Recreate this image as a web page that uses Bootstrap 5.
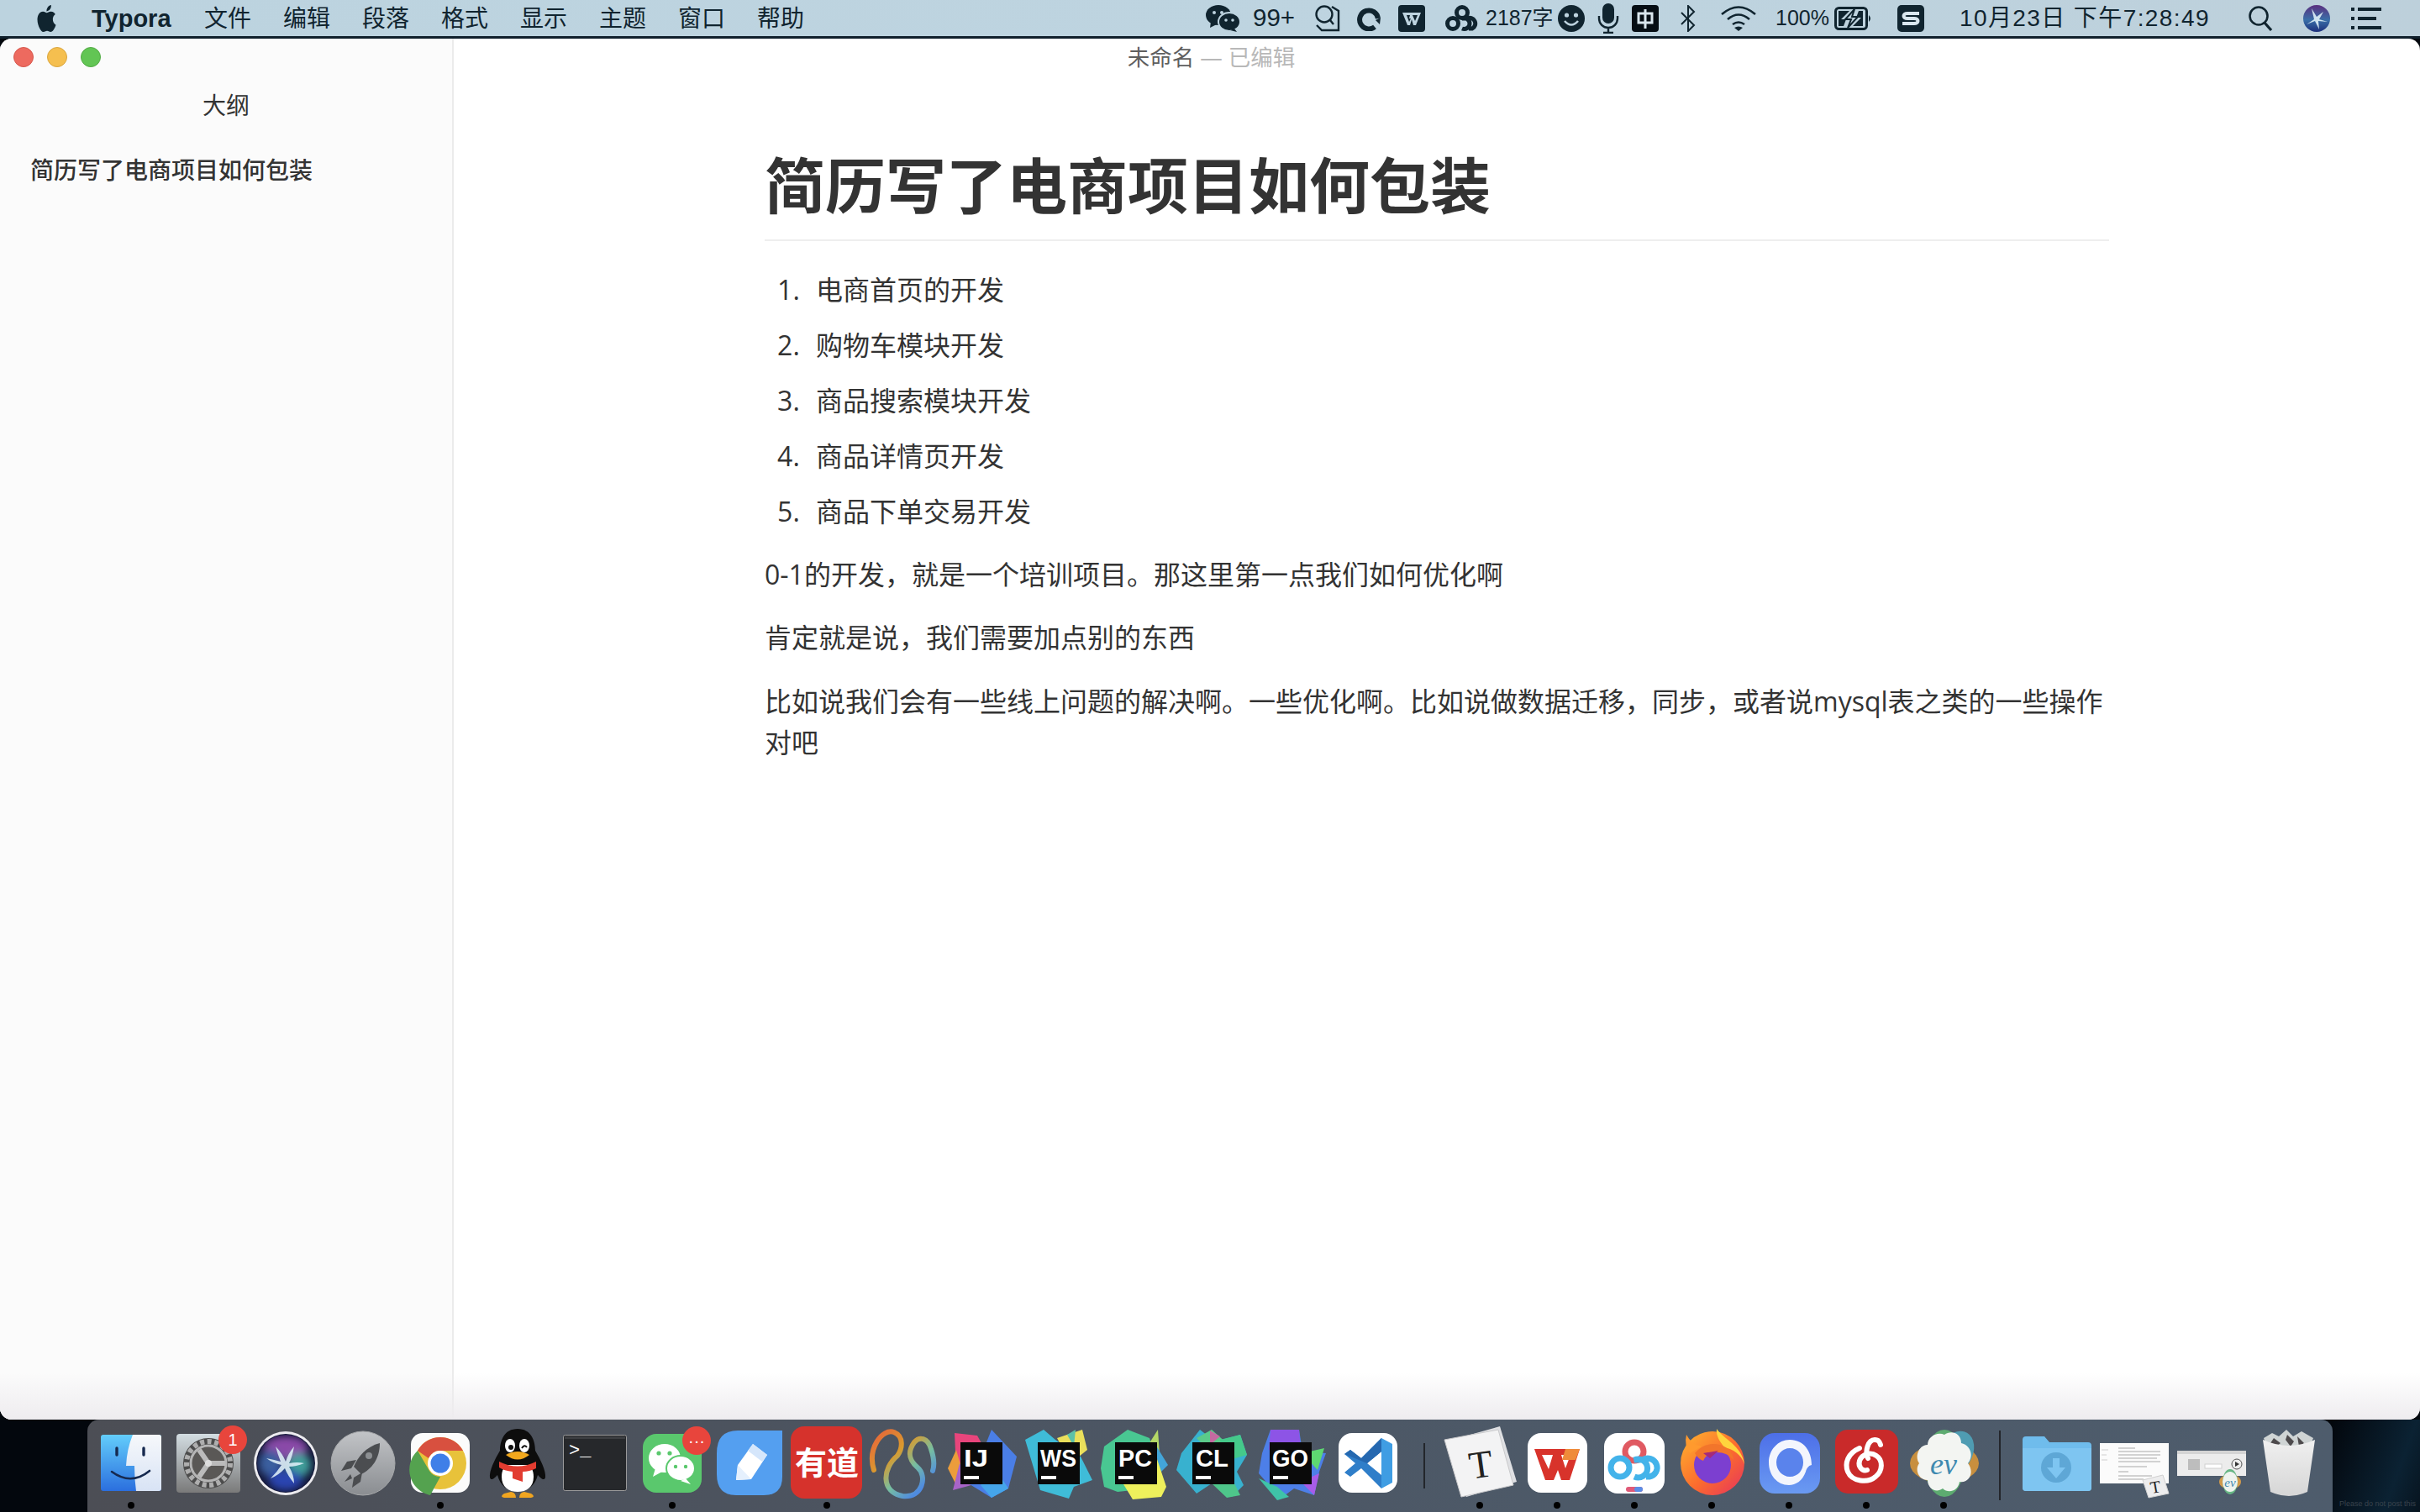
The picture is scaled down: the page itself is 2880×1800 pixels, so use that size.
<!DOCTYPE html>
<html lang="zh-CN">

<head>
    <meta charset="UTF-8">
    <title>未命名 — 已编辑</title>
    <link rel="stylesheet" href="https://cdn.jsdelivr.net/npm/bootstrap@5.3.3/dist/css/bootstrap.min.css">
    <script src="https://cdn.jsdelivr.net/npm/bootstrap@5.3.3/dist/js/bootstrap.bundle.min.js"></script>
    <style>
        html, body { height: 1800px; overflow: hidden; }
        body { background: #03070d; font-family: "Open Sans", "Noto Sans CJK SC", sans-serif; color: #333; }

        /* menu bar */
        .menubar { height: 46px; background: linear-gradient(90deg, #bcd3df, #bed4e0 60%, #bdd0db); border-bottom: 3px solid #10202c; color: #10242f; font-family: "Liberation Sans", "Noto Sans CJK SC", sans-serif; white-space: nowrap; flex: none; }
        .apple { width: 27px; height: 32px; margin-left: 42px; fill: #10242f; }
        .app-name { margin-left: 40px; width: 96px; font-size: 29px; font-weight: 700; padding-top: 2px; }
        .menu-item { margin-left: 38px; width: 56px; font-size: 28px; padding-top: 2px; }
        .status { fill: #10242f; flex: none; }
        .st-big { font-size: 29.500px; }
        .st-small { font-size: 25px; }
        .st-clock { font-size: 28px; letter-spacing: 1.4px; width: 296px; }
        .ml7 { margin-left: 7px; } .ml8 { margin-left: 8px; } .ml10 { margin-left: 10px; }
        .ml15 { margin-left: 15px; } .ml19 { margin-left: 19px; } .ml21 { margin-left: 21px; }
        .ml23 { margin-left: 23px; } .ml24 { margin-left: 24px; } .ml25 { margin-left: 25px; }
        .ml26 { margin-left: 26px; } .ml30 { margin-left: 30px; } .ml36 { margin-left: 36px; }
        .ml42 { margin-left: 42px; } .ml48 { margin-left: 48px; }
        .w50 { width: 50px; } .w60 { width: 60px; } .w78 { width: 78px; }
        .mr46 { margin-right: 46px; }

        /* window */
        .app-window { height: 1644px; flex: none; background: #fff; border-radius: 14px; overflow: hidden; position: relative; }
        .app-window::after { content: ""; position: absolute; left: 0; right: 0; bottom: 0; height: 56px; background: linear-gradient(rgba(238,236,239,0), #eeecef); pointer-events: none; }
        .titlebar { position: absolute; top: 0; left: 0; right: 0; height: 44px; padding-left: 3px; font-size: 26.500px; color: #5f5f5f; line-height: 44px; }
        .lights { position: absolute; left: 16px; top: 10px; }
        .light { width: 24px; height: 24px; border-radius: 50%; }
        .light-red { background: #ed6a5f; border: 1px solid #d5574d; }
        .light-yellow { background: #f5bf4f; border: 1px solid #d9a53f; }
        .light-green { background: #62c554; border: 1px solid #52aa45; }
        .edited { color: #b8b8b8; }
        .outline { width: 540px; flex: none; background: #fbfbfb; border-right: 2px solid #ebebeb; padding-top: 59px; }
        .outline-title { font-size: 28px; line-height: 40px; color: #333; width: 538px; }
        .outline-item { font-size: 28px; font-weight: 500; line-height: 40px; margin: 37px 0 0 36px; color: #333; }
        .paper { width: 1600px; margin: 0 auto; padding-top: 131px; font-size: 32px; line-height: 49.6px; }
        .paper h1 { font-size: 72px; font-weight: 700; line-height: 86px; margin: 0 0 33px; padding-bottom: 22px; border-bottom: 2px solid #eee; color: #333; }
        .paper ol { padding-left: 61px; margin: 0 0 25px; }
        .paper li { margin-bottom: 16.4px; }
        .paper li::marker { content: counter(list-item) ".\2002\200A"; }
        .paper p { margin: 0 0 26px; }

        /* dock */
        .dock-row { height: 110px; flex: none; }
        .gutter { width: 104px; flex: none; overflow: hidden; white-space: nowrap; }
        .gutter-right { background: linear-gradient(110deg, #03070d, #0b2233 70%, #07141f); color: #39434d; font-family: "Liberation Sans", sans-serif; font-size: 9px; padding: 0 0 3px 8px; }
        .dock { width: 2672px; flex: none; padding: 10px 8px 0 6px; border-radius: 14px 14px 0 0; background: linear-gradient(90deg, #4c4e55, #4c5562 40%, #4d5a69 70%, #4e5c6c); }
        .dock-cell { width: 92px; height: 100px; flex: none; position: relative; }
        .dock-cell svg { display: block; overflow: visible; }
        .dock-dot { display: block; width: 8px; height: 8px; border-radius: 50%; margin: 2px auto 0; background: #000; }
        .dock-sep { width: 41px; flex: none; }
        .dock-sep i { display: block; width: 2px; margin: 0 auto; background: #23262b; }
        .sep-short { height: 54px; margin-top: 18px !important; }
        .sep-tall { height: 83px; margin-top: 3px !important; }
        .dock-badge { position: absolute; width: 34px; height: 34px; border-radius: 50%; background: #e8453c; color: #fff; font-size: 20px; line-height: 34px; text-align: center; padding: 0; font-family: "Liberation Sans", sans-serif; }
        .badge-set { left: 58px; top: -3px; }
        .badge-chat { left: 58px; top: -2px; }
        .jb-text { font-family: "Liberation Sans", sans-serif; font-weight: 700; font-size: 29px; fill: #fff; }
    </style>
</head>

<body class="d-flex flex-column">
    <header class="menubar d-flex align-items-center">
        <svg class="apple" viewBox="0 0 24 24" preserveAspectRatio="none"><path d="M12.152 6.896c-.948 0-2.415-1.078-3.96-1.04-2.04.027-3.91 1.183-4.961 3.014-2.117 3.675-.546 9.103 1.519 12.09 1.013 1.454 2.208 3.09 3.792 3.039 1.52-.065 2.09-.987 3.935-.987 1.831 0 2.35.987 3.96.948 1.637-.026 2.676-1.48 3.676-2.948 1.156-1.688 1.636-3.325 1.662-3.415-.039-.013-3.182-1.221-3.22-4.857-.026-3.04 2.48-4.494 2.597-4.559-1.429-2.09-3.623-2.324-4.39-2.376-2-.156-3.675 1.09-4.61 1.09zM15.53 3.83c.843-1.012 1.4-2.427 1.245-3.83-1.207.052-2.662.805-3.532 1.818-.78.896-1.454 2.338-1.273 3.714 1.338.104 2.715-.688 3.559-1.701"/></svg>
        <span class="app-name">Typora</span>
        <span class="menu-item">文件</span>
        <span class="menu-item">编辑</span>
        <span class="menu-item">段落</span>
        <span class="menu-item">格式</span>
        <span class="menu-item">显示</span>
        <span class="menu-item">主题</span>
        <span class="menu-item">窗口</span>
        <span class="menu-item">帮助</span>

        <!-- status items, left to right -->
        <svg class="status ms-auto" width="41" height="32" viewBox="0 0 41 32"><ellipse cx="15" cy="12" rx="15" ry="12"/><path d="M6 20l-1 7 8-4z"/><ellipse cx="28" cy="20" rx="13" ry="11" stroke="#bdd3df" stroke-width="2"/><path d="M34 28l3 4-8-2z"/><circle cx="10" cy="9" r="2" fill="#bdd3df"/><circle cx="19" cy="9" r="2" fill="#bdd3df"/><circle cx="24" cy="18" r="1.8" fill="#bdd3df"/><circle cx="32" cy="18" r="1.8" fill="#bdd3df"/></svg>
        <span class="st-big ml15 w50">99+</span>
        <svg class="status ml24" width="31" height="32" viewBox="0 0 31 32"><circle cx="11" cy="11" r="9.500" fill="none" stroke="#10242f" stroke-width="2.400"/><path d="M18 18l4 5M20 2l8 5v23H8l-6-6" fill="none" stroke="#10242f" stroke-width="2.400"/></svg>
        <svg class="status ml19" width="28" height="30" viewBox="0 0 28 30"><path d="M21 25A11 11 0 1 1 25 15" fill="none" stroke="#10242f" stroke-width="6"/><path d="M22 17l6-3-1 8z"/></svg>
        <svg class="status ml21" width="32" height="32" viewBox="0 0 32 32"><rect width="32" height="32" rx="4"/><path d="M5 9h22l-6 15h-3l-2-7-2 7h-3z" fill="#bdd3df"/><path d="M10 12h4l-1 4 2 0-2 4zM17 12h6l-3 7z"/></svg>
        <svg class="status ml24" width="41" height="32" viewBox="0 0 41 32"><g fill="none" stroke="#10242f" stroke-width="5"><circle cx="20" cy="9" r="6.500"/><circle cx="9" cy="22" r="6.500"/><path d="M20 28a6.500 6.500 0 1 0 0-12h6a6.500 6.500 0 1 1 6 12h-4"/></g></svg>
        <span class="st-small ml7 w78">2187字</span>
        <svg class="status ml8" width="32" height="32" viewBox="0 0 32 32"><circle cx="16" cy="16" r="16"/><circle cx="10.500" cy="12" r="2.600" fill="#bdd3df"/><circle cx="21.500" cy="12" r="2.600" fill="#bdd3df"/><path d="M8 19q8 9 16 0" fill="none" stroke="#bdd3df" stroke-width="2.600"/></svg>
        <svg class="status ml15" width="26" height="36" viewBox="0 0 26 36"><rect x="6" y="0" width="14" height="24" rx="7"/><path d="M2 15v3a11 11 0 0 0 22 0v-3M13 29v5M7 35h12" fill="none" stroke="#10242f" stroke-width="2.400"/></svg>
        <svg class="status ml15" width="32" height="32" viewBox="0 0 32 32"><rect width="32" height="32" rx="4" fill="#050d14"/><path d="M8 10h16v11H8zM16 5v23" fill="none" stroke="#d9e6ee" stroke-width="3"/></svg>
        <svg class="status ml26" width="18" height="32" viewBox="0 0 18 32"><path d="M1 9l15 15-7 7V1l7 7L1 23" fill="none" stroke="#10242f" stroke-width="2"/></svg>
        <svg class="status ml30" width="42" height="30" viewBox="0 0 42 30"><g fill="none" stroke="#10242f" stroke-width="2.600"><path d="M1 10q20-17 40 0"/><path d="M8 16q13-11 26 0"/><path d="M14 22q7-5 14 0"/></g><path d="M16 26q5-3 10 0l-5 4z"/></svg>
        <span class="st-small ml23 w60">100%</span>
        <svg class="status ml10" width="45" height="28" viewBox="0 0 45 28"><rect x="1.500" y="1.500" width="37" height="25" rx="4" fill="none" stroke="#10242f" stroke-width="3"/><path d="M41 10q4 4 0 8z"/><path d="M5 5h13L8 15h6l-3 8H5zM34 23H22l10-10h-6l3-8h5z"/><path d="M24 3L13 15h7l-4 10 12-13h-7z" fill="none" stroke="#10242f" stroke-width="2"/></svg>
        <svg class="status ml30" width="32" height="32" viewBox="0 0 32 32"><rect width="32" height="32" rx="5"/><path d="M26 10H12c-6 0-6 6 0 6h8c6 0 6 6 0 6H6" fill="none" stroke="#d9e6ee" stroke-width="4"/></svg>
        <span class="st-clock ml42">10月23日 下午7:28:49</span>
        <svg class="status ml48" width="29" height="30" viewBox="0 0 29 30"><circle cx="12" cy="12" r="10.500" fill="none" stroke="#10242f" stroke-width="2.600"/><path d="M19 20l8 9" stroke="#10242f" stroke-width="3.200"/></svg>
        <svg class="status ml36" width="32" height="32" viewBox="0 0 32 32"><defs><linearGradient id="siriMini" x1="0" y1="0" x2="0" y2="1"><stop offset="0" stop-color="#5a2f7f"/><stop offset=".55" stop-color="#3a6fa8"/><stop offset="1" stop-color="#1c2f7c"/></linearGradient></defs><circle cx="16" cy="16" r="16" fill="url(#siriMini)"/><path d="M10 4l6 10 8-6-5 9 10 3-11-1 1 10-5-10-10 4 9-6z" fill="#dff1f7" opacity=".9"/></svg>
        <svg class="status ml25 mr46" width="36" height="26" viewBox="0 0 36 26"><path d="M0 0h4v4H0zM8 0h28v4H8zM0 11h4v4H0zM8 11h22v4H8zM0 22h4v4H0zM8 22h28v4H8z"/></svg>
    </header>

    <main class="app-window d-flex">
        <aside class="outline">
            <div class="outline-title text-center">大纲</div>
            <div class="outline-item">简历写了电商项目如何包装</div>
        </aside>
        <section class="flex-grow-1">
            <article class="paper">
                <h1>简历写了电商项目如何包装</h1>
                <ol>
                    <li>电商首页的开发</li>
                    <li>购物车模块开发</li>
                    <li>商品搜索模块开发</li>
                    <li>商品详情页开发</li>
                    <li>商品下单交易开发</li>
                </ol>
                <p>0-1的开发&#xFF0C;就是一个培训项目。那这里第一点我们如何优化啊</p>
                <p>肯定就是说&#xFF0C;我们需要加点别的东西</p>
                <p>比如说我们会有一些线上问题的解决啊。一些优化啊。比如说做数据迁移&#xFF0C;同步&#xFF0C;或者说mysql表之类的一些操作对吧</p>
            </article>
        </section>
        <div class="titlebar text-center">未命名 <span class="edited">— 已编辑</span></div>
        <div class="lights d-flex gap-3">
            <span class="light light-red"></span>
            <span class="light light-yellow"></span>
            <span class="light light-green"></span>
        </div>
    </main>

    <div class="dock-row d-flex">
        <div class="gutter"></div>
        <nav class="dock d-flex">
            <!-- finder -->
            <div class="dock-cell"><svg width="92" height="86" viewBox="0 0 92 86"><defs><linearGradient id="fa" x1="0" y1="0" x2="0" y2="1"><stop offset="0" stop-color="#63cdfb"/><stop offset="1" stop-color="#2b6fde"/></linearGradient><linearGradient id="fb" x1="0" y1="0" x2="0" y2="1"><stop offset="0" stop-color="#f6f8fb"/><stop offset="1" stop-color="#d8e3f5"/></linearGradient></defs><rect x="10" y="8" width="72" height="67" rx="3" fill="url(#fa)"/><path d="M48 8h31a3 3 0 0 1 3 3v61a3 3 0 0 1-3 3H52q-2-14-2-30H40q1-20 8-37z" fill="url(#fb)"/><path d="M29 24v8M61 24v8" stroke="#16294f" stroke-width="3.400" stroke-linecap="round"/><path d="M23 52q23 17 45-1" fill="none" stroke="#16294f" stroke-width="2.600" stroke-linecap="round"/></svg><i class="dock-dot"></i></div>
            <!-- system preferences -->
            <div class="dock-cell"><svg width="92" height="86" viewBox="0 0 92 86"><defs><linearGradient id="sp" x1="0" y1="0" x2="0" y2="1"><stop offset="0" stop-color="#d3dde2"/><stop offset="1" stop-color="#7a7a7a"/></linearGradient></defs><rect x="8" y="7" width="76" height="70" rx="4" fill="url(#sp)"/><circle cx="46" cy="42" r="30" fill="#4c4c4c"/><circle cx="46" cy="42" r="26" fill="none" stroke="#aeaeae" stroke-width="6" stroke-dasharray="5 3.600"/><circle cx="46" cy="42" r="21" fill="#5a5856" stroke="#b5b5b5" stroke-width="3"/><path d="M46 42h20M46 42L35 26M46 42L35 58" stroke="#bbb" stroke-width="6"/><circle cx="46" cy="42" r="4" fill="#ddd"/></svg><i class="dock-dot invisible"></i><span class="dock-badge badge-set">1</span></div>
            <!-- siri -->
            <div class="dock-cell"><svg width="92" height="86" viewBox="0 0 92 86"><defs><filter id="sb"><feGaussianBlur stdDeviation="5"/></filter><clipPath id="sc"><circle cx="46" cy="42" r="34"/></clipPath></defs><circle cx="46" cy="42" r="38" fill="#ecebef"/><circle cx="46" cy="42" r="35" fill="#14183a"/><g clip-path="url(#sc)"><g filter="url(#sb)"><ellipse cx="46" cy="24" rx="26" ry="14" fill="#8a4aa8"/><ellipse cx="28" cy="42" rx="14" ry="16" fill="#3a5f9f"/><ellipse cx="62" cy="44" rx="14" ry="14" fill="#3f9f9a"/><ellipse cx="46" cy="62" rx="20" ry="12" fill="#2a45b0"/></g><path d="M34 22q8 8 12 18 3-10 10-18-2 12-6 20 10-2 18 0-10 4-18 4 6 10 6 20-8-10-11-18-7 8-17 12 8-8 13-16-10-2-18-8 10 2 17 4-4-10-6-18z" fill="#dcecf5" opacity=".9"/></g></svg><i class="dock-dot invisible"></i></div>
            <!-- launchpad -->
            <div class="dock-cell"><svg width="92" height="86" viewBox="0 0 92 86"><defs><linearGradient id="lp" x1="0" y1="0" x2="0" y2="1"><stop offset="0" stop-color="#c2c4c7"/><stop offset="1" stop-color="#8a8d91"/></linearGradient></defs><circle cx="46" cy="42" r="38" fill="url(#lp)" stroke="#a6a8aa" stroke-width="1"/><path d="M66 18C50 22 40 34 35 46l9 9c12-6 22-18 22-37z" fill="#4b4d50"/><path d="M38 38l-11 2-7 11 12-3zM45 53l-2 11-10 7 2-12zM31 55l-7 9 9-4z" fill="#4b4d50"/><circle cx="53" cy="33" r="4" fill="#8c8f92"/></svg><i class="dock-dot invisible"></i></div>
            <!-- chrome -->
            <div class="dock-cell"><svg width="92" height="86" viewBox="0 0 92 86"><rect x="11" y="6" width="70" height="71" rx="14" fill="#fbfbfb"/><circle cx="46" cy="42" r="31" fill="#e8c23a"/><path d="M46 11a31 31 0 0 1 27 16H46a15 15 0 0 0-14 9L19 27a31 31 0 0 1 27-16z" fill="#d8503f"/><path d="M19 27l14 24a15 15 0 0 0 13 7l-12 22A31 31 0 0 1 19 27z" fill="#54a24f"/><circle cx="46" cy="42" r="15" fill="#fff"/><circle cx="46" cy="42" r="11.500" fill="#3f7fe8"/></svg><i class="dock-dot"></i></div>
            <!-- qq -->
            <div class="dock-cell"><svg width="92" height="86" viewBox="0 0 92 86"><path d="M46 1c-16 0-21 14-21 26-6 10-13 24-12 32 2 5 6 0 9-3 3 12 12 20 24 20s21-8 24-20c3 3 7 8 9 3 1-8-6-22-12-32C67 15 62 1 46 1z" fill="#0d0d0d"/><path d="M27 58c0-8 3-12 8-14h22c5 2 8 6 8 14 0 12-8 18-19 18s-19-6-19-18z" fill="#fff"/><ellipse cx="37" cy="21" rx="6" ry="8" fill="#fff"/><ellipse cx="54" cy="21" rx="6" ry="8" fill="#fff"/><circle cx="38" cy="23" r="3" fill="#111"/><path d="M51 24q3-5 6-1" stroke="#111" stroke-width="2" fill="none"/><path d="M32 32q14-8 28 0-14 11-28 0z" fill="#f2a81d"/><path d="M24 40q22 11 44 0v8q-8 4-16 4v12l-12-4v-8q-10-1-16-5z" fill="#e23c30"/><path d="M30 78q-6 4 0 5h14q0-6-6-7zM62 78q6 4 0 5H48q0-6 6-7z" fill="#f0a520"/></svg><i class="dock-dot invisible"></i></div>
            <!-- terminal -->
            <div class="dock-cell"><svg width="92" height="86" viewBox="0 0 92 86"><rect x="8.500" y="8.500" width="75" height="66" rx="2" fill="#26282b" stroke="#9a9a9a"/><rect x="10" y="10" width="72" height="3" fill="#3c3e41"/><text x="15" y="33" fill="#fff" font-size="22" font-family="Liberation Mono, monospace">&gt;_</text></svg><i class="dock-dot invisible"></i></div>
            <!-- wechat -->
            <div class="dock-cell"><svg width="92" height="86" viewBox="0 0 92 86"><rect x="11" y="7" width="70" height="70" rx="16" fill="#5ac86d"/><ellipse cx="37" cy="36" rx="19" ry="17" fill="#fff"/><path d="M26 48l-3 10 11-6z" fill="#fff"/><ellipse cx="56" cy="48" rx="17" ry="15" fill="#fff" stroke="#5ac86d" stroke-width="2"/><path d="M62 60l6 7-12-4z" fill="#fff"/><circle cx="30" cy="30" r="2.600" fill="#5ac86d"/><circle cx="43" cy="30" r="2.600" fill="#5ac86d"/><circle cx="50" cy="46" r="2.200" fill="#5ac86d"/><circle cx="62" cy="46" r="2.200" fill="#5ac86d"/></svg><i class="dock-dot"></i><span class="dock-badge badge-chat">···</span></div>
            <!-- blue notes -->
            <div class="dock-cell"><svg width="92" height="86" viewBox="0 0 92 86"><path d="M32 3h53v55q0 22-22 22H30Q7 80 7 55V30Q7 3 32 3z" fill="#549ff0"/><path d="M30 62l2-18 18-25 17 13-19 29z" fill="#fff"/><path d="M50 19l17 13-6 8-17-13z" fill="#d5e6fb"/><path d="M30 62l2-18 16 17z" fill="#e5f0fd"/></svg><i class="dock-dot invisible"></i></div>
            <!-- youdao -->
            <div class="dock-cell"><svg width="92" height="86" viewBox="0 0 92 86"><rect x="3" y="-2" width="85" height="86" rx="16" fill="#d6322c"/><text x="46" y="55" text-anchor="middle" fill="#fff" font-size="38" font-weight="700" font-family="Noto Sans CJK SC, sans-serif">有道</text></svg><i class="dock-dot"></i></div>
            <!-- navicat -->
            <div class="dock-cell"><svg width="92" height="86" viewBox="0 0 92 86"><defs><linearGradient id="nv" gradientUnits="userSpaceOnUse" x1="10" y1="5" x2="80" y2="80"><stop offset="0" stop-color="#e8643a"/><stop offset=".35" stop-color="#d99a2e"/><stop offset=".6" stop-color="#78bfa0"/><stop offset=".85" stop-color="#4f8be0"/></linearGradient></defs><path d="M10 50C2 24 20 0 34 5c12 5 10 20 4 28C20 48 18 76 44 81c24 3 30-24 18-34-8-7-14-16-4-30 6-7 16-6 20 8 4 12 4 20 2 26" fill="none" stroke="url(#nv)" stroke-width="6" stroke-linecap="round"/></svg><i class="dock-dot invisible"></i></div>
            <!-- intellij -->
            <div class="dock-cell"><svg width="92" height="86" viewBox="0 0 92 86"><path d="M14 6l27 3 10 18-15 30-20-6z" fill="#e8457c"/><path d="M6 48l10-22 8 28-6 18z" fill="#eb9d3b"/><path d="M12 74l8-32 14 26z" fill="#a864c8"/><path d="M58 2l30 32-10 38-20 11-26-16z" fill="#4a7ee6"/><path d="M45 68l20-16 13 20-20 11z" fill="#45a5ea"/><rect x="21" y="17" width="50" height="50" fill="#0a0a0a"/><text class="jb-text" x="25" y="46" textLength="29" lengthAdjust="spacingAndGlyphs">IJ</text><rect x="25" y="57" width="18" height="4" fill="#fff"/></svg><i class="dock-dot invisible"></i></div>
            <!-- webstorm -->
            <div class="dock-cell"><svg width="92" height="86" viewBox="0 0 92 86"><path d="M6 14L28 2l14 12 30 20 14 28-22 8-6 14-34-10z" fill="#3fbcd8"/><path d="M44 12l30-10 6 24-20 16z" fill="#eadf5b"/><path d="M56 8l10-6-2 20z" fill="#5cc1a8"/><rect x="21" y="17" width="50" height="50" fill="#0a0a0a"/><text class="jb-text" x="24" y="46" textLength="43" lengthAdjust="spacingAndGlyphs">WS</text><rect x="25" y="57" width="18" height="4" fill="#fff"/></svg><i class="dock-dot invisible"></i></div>
            <!-- pycharm -->
            <div class="dock-cell"><svg width="92" height="86" viewBox="0 0 92 86"><path d="M8 22L36 2l26 10 10 30-12 30-36 4-16-6-4-22z" fill="#49c792"/><path d="M58 24l14-22 2 30z" fill="#b4d866"/><path d="M68 18l16 26-10 10z" fill="#43a5d9"/><path d="M28 62l42-28 12 36-6 12-34 3z" fill="#eef05c"/><rect x="21" y="17" width="50" height="50" fill="#0a0a0a"/><text class="jb-text" x="25" y="46" textLength="40" lengthAdjust="spacingAndGlyphs">PC</text><rect x="25" y="57" width="18" height="4" fill="#fff"/></svg><i class="dock-dot invisible"></i></div>
            <!-- clion -->
            <div class="dock-cell"><svg width="92" height="86" viewBox="0 0 92 86"><path d="M8 30L30 2l18 14 30-8 8 24-12 20 8 16-14 14-24-16-18 12-24-28z" fill="#38b1cf"/><path d="M26 12L44 2l20 18-20 10z" fill="#5bcb8a"/><path d="M42 3l12 7-12 10z" fill="#c46aa0"/><path d="M54 14l24-6 8 24-28 8z" fill="#45c98a"/><path d="M42 64l22-12 14 28-16 3z" fill="#4ec68a"/><rect x="21" y="17" width="50" height="50" fill="#0a0a0a"/><text class="jb-text" x="25" y="46" textLength="39" lengthAdjust="spacingAndGlyphs">CL</text><rect x="25" y="57" width="18" height="4" fill="#fff"/></svg><i class="dock-dot invisible"></i></div>
            <!-- goland -->
            <div class="dock-cell"><svg width="92" height="86" viewBox="0 0 92 86"><path d="M22 2h34l4 26 28 2-8 22-6 28-24-8-16 12-26-30 4-24z" fill="#4d7fe8"/><path d="M22 2h34l2 24H20z" fill="#8d54e6"/><path d="M60 30l26-6-8 26z" fill="#5ed872"/><path d="M58 64l22-10-6 26z" fill="#a85ce8"/><path d="M8 60l22 10 14 12-14 4z" fill="#3fc3a8"/><rect x="21" y="17" width="50" height="50" fill="#0a0a0a"/><text class="jb-text" x="24" y="46" textLength="43" lengthAdjust="spacingAndGlyphs">GO</text><rect x="25" y="57" width="18" height="4" fill="#fff"/></svg><i class="dock-dot invisible"></i></div>
            <!-- vscode -->
            <div class="dock-cell"><svg width="92" height="86" viewBox="0 0 92 86"><rect x="11" y="6" width="70" height="71" rx="16" fill="#fff"/><path d="M62 12L38 36 25 26l-7 5 13 11-13 11 7 5 13-10 24 24V56L45 42l17-14z" fill="#2f7ec9"/><path d="M62 12L38 36 25 26l-7 5 27 11 17-14z" fill="#2568b0"/><path d="M62 12l13 7v46l-13 7z" fill="#3f9de3"/></svg><i class="dock-dot invisible"></i></div>
            <div class="dock-sep"><i class="sep-short"></i></div>
            <!-- typora -->
            <div class="dock-cell"><svg width="92" height="86" viewBox="0 0 92 86"><path d="M6 16L70 -2l20 66-60 18z" fill="#dfe0e3"/><path d="M4 14L68 2l18 66-62 14z" fill="#f3f3f4" stroke="#c9c9cb"/><text x="47" y="59" text-anchor="middle" transform="rotate(-8 47 41)" font-size="46" fill="#222" font-family="Liberation Serif, serif">T</text></svg><i class="dock-dot"></i></div>
            <!-- wps -->
            <div class="dock-cell"><svg width="92" height="86" viewBox="0 0 92 86"><rect x="11" y="6" width="71" height="71" rx="16" fill="#fff"/><path d="M19 25h54L61 62H51l-4-12-5 12H32z" fill="#d8332b"/><path d="M28 32h13l-5 17zM51 32h11l-6 16z" fill="#fff"/><path d="M56 25h17l-5 13H52z" fill="#ef8b3a"/></svg><i class="dock-dot"></i></div>
            <!-- baidu netdisk -->
            <div class="dock-cell"><svg width="92" height="86" viewBox="0 0 92 86"><rect x="10" y="6" width="72" height="72" rx="16" fill="#fff"/><g fill="none" stroke-width="7"><circle cx="46" cy="28" r="11" stroke="#e05a62"/><circle cx="29" cy="47" r="11" stroke="#43b3ea"/><path d="M46 58a11 11 0 1 0 0-20h10a11 11 0 1 1 8 20h-4" stroke="#43b3ea"/></g><rect x="36" y="70" width="20" height="6" rx="3" fill="#e05a78"/><rect x="46" y="70" width="10" height="6" rx="3" fill="#5b8de6"/></svg><i class="dock-dot"></i></div>
            <!-- firefox -->
            <div class="dock-cell"><svg width="92" height="86" viewBox="0 0 92 86"><defs><linearGradient id="ff" x1="0" y1="0" x2="1" y2="1"><stop offset="0" stop-color="#ffb52e"/><stop offset=".55" stop-color="#fb6b2e"/><stop offset="1" stop-color="#e6325f"/></linearGradient></defs><circle cx="47" cy="42" r="38" fill="url(#ff)"/><path d="M52 1c8 12 30 20 33 42-4-12-14-18-24-20-6-8-10-14-9-22z" fill="#ffd53d"/><path d="M16 8q-3 12 4 22l14-8q-12-2-18-14z" fill="#ff9a2e"/><circle cx="47" cy="44" r="22" fill="#7c3fd0"/><path d="M26 30q12-14 30-10 14 4 16 18-8-10-22-9-10 1-14 10-6-2-10-9z" fill="#f2752b"/><path d="M36 30l18-3-10 9z" fill="#a52a7a"/></svg><i class="dock-dot"></i></div>
            <!-- blue ring app -->
            <div class="dock-cell"><svg width="92" height="86" viewBox="0 0 92 86"><defs><linearGradient id="rg" x1="0" y1="0" x2="0" y2="1"><stop offset="0" stop-color="#4d6fe8"/><stop offset="1" stop-color="#6a9af2"/></linearGradient></defs><rect x="11" y="6" width="72" height="72" rx="18" fill="url(#rg)"/><path d="M47 14c17 0 26 14 26 30-4 1-6 4-7 8-4 11-12 16-20 16-14 0-24-12-24-27s11-27 25-27z" fill="#f3f5fd"/><path d="M47 24c-9 0-16 8-16 17s7 17 16 17c10 0 16-8 16-17s-6-17-16-17z" fill="#5a83ec"/></svg><i class="dock-dot"></i></div>
            <!-- netease music -->
            <div class="dock-cell"><svg width="92" height="86" viewBox="0 0 92 86"><rect x="9" y="2" width="75" height="76" rx="15" fill="#c92a2a"/><path d="M38 24c-14 6-18 18-14 28 5 12 24 14 33 6 9-7 9-20 1-25-7-5-17-2-20 6-2 7 3 13 9 11M48 36c-4-8 0-22 8-22 5 0 6 3 7 6" fill="none" stroke="#fff" stroke-width="6" stroke-linecap="round"/></svg><i class="dock-dot"></i></div>
            <!-- ev recorder -->
            <div class="dock-cell"><svg width="92" height="86" viewBox="0 0 92 86"><ellipse cx="47" cy="42" rx="41" ry="24" fill="#c88f3e"/><ellipse cx="47" cy="42" rx="24" ry="40" fill="#5dab70"/><ellipse cx="60" cy="30" rx="20" ry="28" fill="#4f9cb2" transform="rotate(30 60 30)"/><path d="M47 8c8-6 20-2 20 10 10 2 16 14 8 24 8 10 2 24-10 22-2 12-14 14-20 8-8 6-18 0-18-10-10 0-16-12-10-20-6-8 0-22 10-22 0-10 12-16 20-12z" fill="#f3f5f2"/><text x="46" y="55" text-anchor="middle" font-size="36" font-style="italic" fill="#3f8ab0" font-family="Liberation Serif, serif">ev</text></svg><i class="dock-dot"></i></div>
            <div class="dock-sep"><i class="sep-tall"></i></div>
            <!-- downloads folder -->
            <div class="dock-cell"><svg width="92" height="86" viewBox="0 0 92 86"><path d="M7 14a4 4 0 0 1 4-4h22l6 7h46a4 4 0 0 1 4 4v50a4 4 0 0 1-4 4H11a4 4 0 0 1-4-4z" fill="#6fbcec"/><path d="M7 24h82v47a4 4 0 0 1-4 4H11a4 4 0 0 1-4-4z" fill="#7ec5f1"/><circle cx="47" cy="47" r="18" fill="#5ea7d6"/><path d="M43 36h8v11h7L47 60 36 47h7z" fill="#7ec5f1"/></svg><i class="dock-dot invisible"></i></div>
            <!-- stack: document -->
            <div class="dock-cell"><svg width="92" height="86" viewBox="0 0 92 86"><rect x="7" y="18" width="82" height="48" fill="#fbfbfb"/><path d="M29 24h20M29 28h50M29 32h50M29 36h46M29 40h50M29 46h34M29 52h12M29 57h40M29 61h30" stroke="#a9a9a9" stroke-width="1"/><path d="M9 26h8M9 32h6M9 38h7" stroke="#cfcfcf" stroke-width="1"/><path d="M58 62l24-6 7 22-24 5z" fill="#ededee" stroke="#d0d0d0"/><text x="73" y="77" text-anchor="middle" font-size="20" fill="#222" transform="rotate(-10 73 70)" font-family="Liberation Serif, serif">T</text></svg><i class="dock-dot invisible"></i></div>
            <!-- stack: window thumbnail -->
            <div class="dock-cell"><svg width="92" height="86" viewBox="0 0 92 86"><rect x="7" y="27" width="82" height="30" fill="#ececec"/><rect x="7" y="27" width="82" height="4" fill="#d4d4d4"/><rect x="20" y="37" width="14" height="13" fill="#bdbdbd"/><rect x="40" y="43" width="20" height="5" fill="#fff" stroke="#cfcfcf"/><circle cx="78" cy="43" r="6" fill="none" stroke="#555"/><path d="M76 40l5 3-5 3z" fill="#333"/><ellipse cx="70" cy="64" rx="13" ry="9" fill="#d09a4c"/><ellipse cx="70" cy="64" rx="9" ry="15" fill="#66b684"/><ellipse cx="70" cy="64" rx="9" ry="12" fill="#eef3ee"/><text x="70" y="70" text-anchor="middle" font-size="15" font-style="italic" fill="#3f8ab0" font-family="Liberation Serif, serif">ev</text></svg><i class="dock-dot invisible"></i></div>
            <!-- trash -->
            <div class="dock-cell"><svg width="92" height="86" viewBox="0 0 92 86"><defs><linearGradient id="tr" x1="0" y1="0" x2="0" y2="1"><stop offset="0" stop-color="#f0f0f0"/><stop offset="1" stop-color="#d6d6d6"/></linearGradient></defs><path d="M18 12l10-6 8 4 9-8 8 8 10-6 14 8-5 12H22z" fill="#cfd4d4"/><path d="M30 12l8 6-5 4-7-4zM46 8l8 8-4 6-6-8zM58 10l8 8-6 4z" fill="#4d4a4c"/><path d="M17 14q31 14 62 0l-9 62q-22 10-44 0z" fill="url(#tr)"/></svg><i class="dock-dot invisible"></i></div>
        </nav>
        <div class="gutter gutter-right d-flex align-items-end flex-grow-1">Please do not post this</div>
    </div>
</body>

</html>
